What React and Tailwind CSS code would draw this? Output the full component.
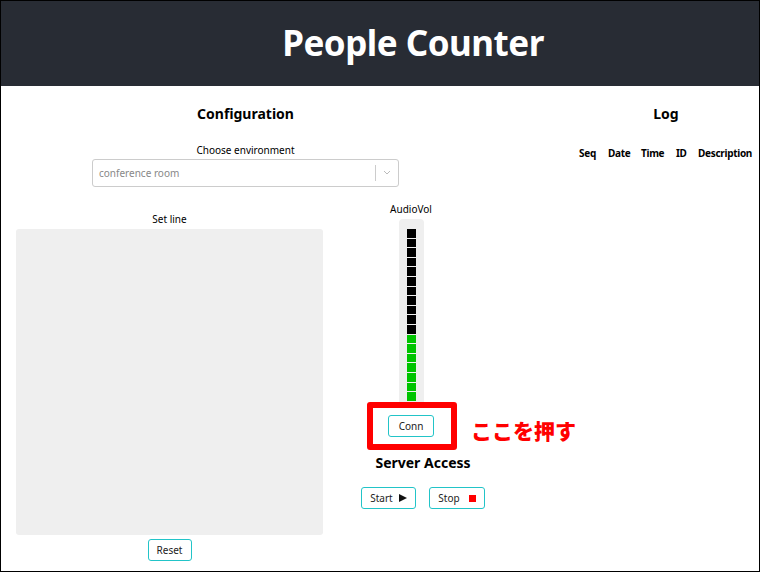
import React from 'react';

const LEVELS = 18;
const ACTIVE = 7;

function Meter() {
  const cells = [];
  for (let i = 0; i < LEVELS; i++) {
    const on = i >= LEVELS - ACTIVE;
    cells.push(
      <div
        key={i}
        className={`w-[9px] h-[8.6px] ${on ? 'bg-[#00c400]' : 'bg-black'}`}
      />
    );
  }
  return (
    <div className="w-[25px] h-[188px] bg-[#efefef] rounded-sm flex flex-col items-center gap-px pt-[10px]">
      {cells}
    </div>
  );
}

function OutlineButton({ children, className = '' }) {
  return (
    <button
      className={`h-[22px] border border-[#22c4c8] rounded-[3px] bg-white text-[10px] text-[#222] flex items-center justify-center ${className}`}
    >
      {children}
    </button>
  );
}

export default function App() {
  return (
    <div
      className="relative w-[760px] h-[572px] border border-black bg-white overflow-hidden"
      style={{ fontFamily: '"Noto Sans", "Noto Sans CJK JP", sans-serif' }}
    >
      {/* Header */}
      <div className="h-[85px] bg-[#282c34] flex items-center justify-center pl-[66px]">
        <h1 className="text-white text-[35px] font-bold tracking-[-0.5px]">People Counter</h1>
      </div>

      <div className="flex">
        {/* Configuration */}
        <div className="w-[489px] flex flex-col">
          <div className="flex flex-col items-center pt-[18px]">
            <h2 className="text-[14px] font-bold leading-5 text-black">Configuration</h2>
            <div className="mt-[19px] text-[10px] leading-[14px] text-black">Choose environment</div>
            <div className="mt-[2px] w-[307px] h-[28px] border border-[#ccc] rounded-[3px] flex items-center">
              <span className="flex-1 pl-[6px] text-[10px] text-[#888]">conference room</span>
              <div className="w-px h-[16px] bg-[#ccc]" />
              <svg width="22" height="12" viewBox="0 0 22 12" className="text-[#bbb]">
                <path d="M8 4 L11 7 L14 4" fill="none" stroke="currentColor" strokeWidth="1" />
              </svg>
            </div>
          </div>

          <div className="flex mt-[15px]">
            {/* Set line */}
            <div className="ml-[15px] w-[307px] flex flex-col items-center">
              <div className="mt-[10px] text-[10px] leading-[14px] text-black">Set line</div>
              <div className="mt-[3px] w-[307px] h-[306px] bg-[#efefef] rounded-[3px]" />
              <OutlineButton className="mt-[4px] w-[44px]">Reset</OutlineButton>
            </div>

            {/* Audio */}
            <div className="flex flex-col">
              <div className="w-[176px] flex flex-col items-center">
                <div className="text-[10px] leading-[14px] text-black">AudioVol</div>
                <div className="mt-[3px]">
                  <Meter />
                </div>
                <OutlineButton className="mt-[8px] w-[46px]">Conn</OutlineButton>
              </div>
              <div className="w-[198px] ml-[1px] flex flex-col items-center">
                <h3 className="mt-[16px] text-[14px] font-bold leading-5 text-black">Server Access</h3>
                <div className="mt-[14px] flex gap-[13px]">
                  <OutlineButton className="w-[55px] gap-[6px]">
                    Start
                    <svg width="8" height="8" viewBox="0 0 8 8">
                      <path d="M0 0 L8 4 L0 8 Z" fill="#111" />
                    </svg>
                  </OutlineButton>
                  <OutlineButton className="w-[56px] gap-[9px]">
                    Stop
                    <span className="w-[7px] h-[7px] bg-[#ff0000]" />
                  </OutlineButton>
                </div>
              </div>
            </div>
          </div>
        </div>

        {/* Log */}
        <div className="flex flex-col pt-[18px] pl-[89px]">
          <h2 className="w-[174px] text-center text-[14px] font-bold leading-5 text-black">Log</h2>
          <div className="mt-[22px] flex text-[10px] font-bold leading-[14px] text-black tracking-[-0.3px]">
            <span className="w-[29px]">Seq</span>
            <span className="w-[33px]">Date</span>
            <span className="w-[35px]">Time</span>
            <span className="w-[22px]">ID</span>
            <span>Description</span>
          </div>
        </div>
      </div>

      {/* annotation */}
      <div className="absolute left-[366px] top-[401px] w-[90px] h-[48px] border-[6px] border-[#ff0000] rounded-[3px]" />
      <div className="absolute left-[470px] top-[416px] text-[21px] font-black text-[#ff0000] leading-7">
        ここを押す
      </div>
    </div>
  );
}
